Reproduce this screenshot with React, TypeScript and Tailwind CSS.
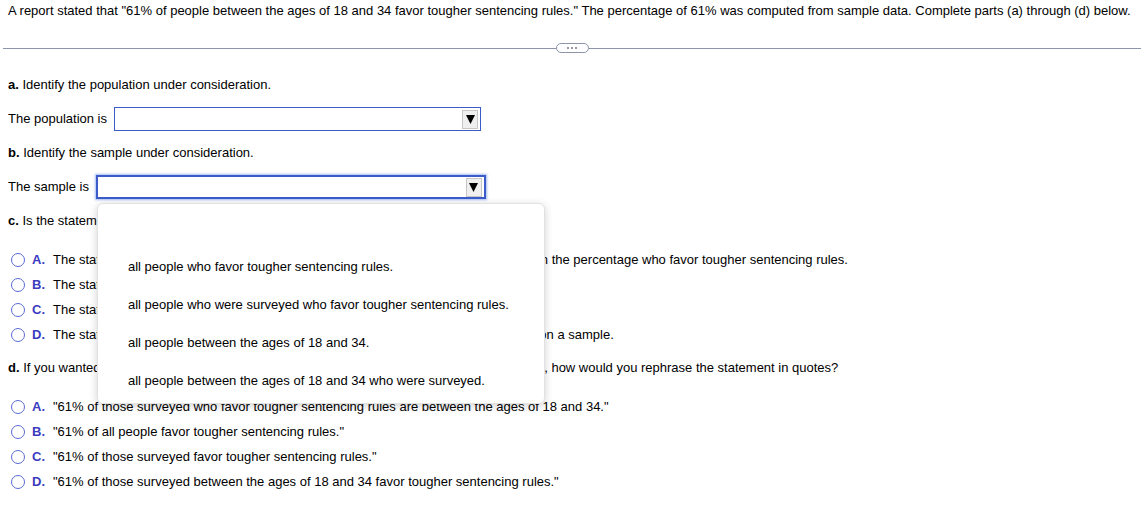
import React from "react";

const font = { fontFamily: '"Liberation Sans", Arial, sans-serif' };

const Arrow = () => (
  <div className="flex h-[19px] w-[16px] items-center justify-center border border-[#c6c6c6] bg-[#efefef]">
    <svg width="9" height="10" viewBox="0 0 9 10">
      <path d="M0 1 H9 L4.5 10 Z" fill="#000" />
    </svg>
  </div>
);

const Radio = () => (
  <span className="inline-block h-[14px] w-[14px] shrink-0 rounded-full border-[1.5px] border-[#5a6bd4] bg-white" />
);

const Choice = ({ letter, children }: { letter: string; children: React.ReactNode }) => (
  <div className="flex h-[25px] items-center whitespace-nowrap pl-[11px]">
    <Radio />
    <span className="ml-[7px] w-[21px] font-bold text-[#3c3cbf]">{letter}.</span>
    <span>{children}</span>
  </div>
);

const options = [
  "",
  "all people who favor tougher sentencing rules.",
  "all people who were surveyed who favor tougher sentencing rules.",
  "all people between the ages of 18 and 34.",
  "all people between the ages of 18 and 34 who were surveyed.",
];

export default function App() {
  return (
    <div className="w-[1141px] h-[530px] overflow-hidden bg-white text-[13px] leading-[16px] text-black" style={font}>
      <p className="pl-[8px] pt-[3px] whitespace-nowrap">
        A report stated that "61% of people between the ages of 18 and 34 favor tougher sentencing rules." The
        percentage of 61% was computed from sample data. Complete parts (a) through (d) below.
      </p>

      <div className="mt-[24px] ml-[3px] flex h-[10px] items-center">
        <div className="h-px flex-1 bg-[#8c96a8]" />
        <div className="flex h-[10px] w-[33px] items-center justify-center gap-[2px] rounded-full border border-[#8c96a8] bg-white">
          <span className="h-[2px] w-[2px] rounded-full bg-[#6f7888]" />
          <span className="h-[2px] w-[2px] rounded-full bg-[#6f7888]" />
          <span className="h-[2px] w-[2px] rounded-full bg-[#6f7888]" />
        </div>
        <div className="h-px flex-1 bg-[#8c96a8]" />
      </div>

      <div className="pl-[8px]">
        <p className="mt-[24px]">
          <b>a.</b> Identify the population under consideration.
        </p>
        <div className="mt-[14px] flex h-[24px] items-center">
          <span className="mr-[7px]">The population is</span>
          <div className="flex h-[24px] w-[367px] items-center justify-end border border-[#3b5bc8] bg-white pr-[2px]">
            <Arrow />
          </div>
        </div>

        <p className="mt-[14px]">
          <b>b.</b> Identify the sample under consideration.
        </p>
        <div className="mt-[14px] flex h-[24px] items-center">
          <span className="mr-[7px]">The sample is</span>
          <div className="relative">
            <div className="flex h-[24px] w-[390px] items-center justify-end border-2 border-[#3b5bc8] bg-white pr-[2px] shadow-[0_0_2px_1px_rgba(90,130,230,0.55)]">
              <Arrow />
            </div>
            <ul className="absolute left-[1px] top-[28px] z-10 w-[448px] rounded-[6px] border border-[#e2e2e2] bg-white pt-[6px] pb-[3px] shadow-[0_2px_8px_rgba(0,0,0,0.18)]">
              {options.map((o, i) => (
                <li key={i} className="flex h-[38px] items-center whitespace-nowrap pl-[30px]">
                  {o}
                </li>
              ))}
            </ul>
          </div>
        </div>

        <p className="mt-[14px]">
          <b>c.</b> Is the statement in quotes descriptive or inferential?
        </p>
      </div>

      <div className="mt-[18px]">
        <Choice letter="A">
          The statement is inferential because it is a generalization about a population based on the percentage who
          favor tougher sentencing rules.
        </Choice>
        <Choice letter="B">The statement is inferential because it is only about the people who were surveyed.</Choice>
        <Choice letter="C">The statement is descriptive because it is only about the people who were surveyed.</Choice>
        <Choice letter="D">
          The statement is descriptive because it is a generalization about a population based on a sample.
        </Choice>
      </div>

      <p className="mt-[13px] pl-[8px] whitespace-nowrap">
        <b>d.</b> If you wanted to make a descriptive statement that refers to the people who were surveyed, how would
        you rephrase the statement in quotes?
      </p>

      <div className="mt-[18px]">
        <Choice letter="A">"61% of those surveyed who favor tougher sentencing rules are between the ages of 18 and 34."</Choice>
        <Choice letter="B">"61% of all people favor tougher sentencing rules."</Choice>
        <Choice letter="C">"61% of those surveyed favor tougher sentencing rules."</Choice>
        <Choice letter="D">"61% of those surveyed between the ages of 18 and 34 favor tougher sentencing rules."</Choice>
      </div>
    </div>
  );
}
